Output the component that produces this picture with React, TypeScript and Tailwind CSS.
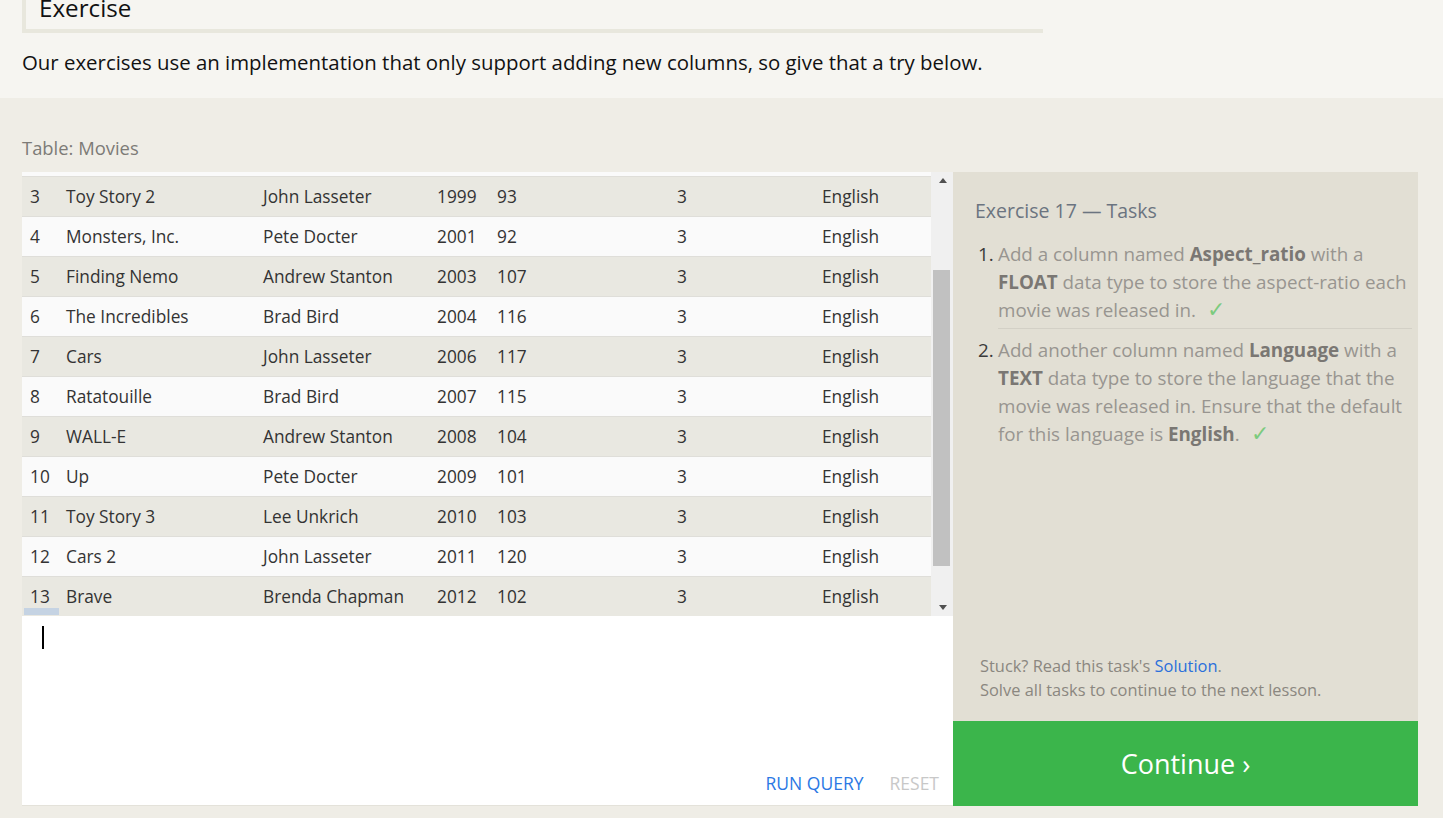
import React from "react";

const rows: [number, string, string, number, number][] = [
  [3, "Toy Story 2", "John Lasseter", 1999, 93],
  [4, "Monsters, Inc.", "Pete Docter", 2001, 92],
  [5, "Finding Nemo", "Andrew Stanton", 2003, 107],
  [6, "The Incredibles", "Brad Bird", 2004, 116],
  [7, "Cars", "John Lasseter", 2006, 117],
  [8, "Ratatouille", "Brad Bird", 2007, 115],
  [9, "WALL-E", "Andrew Stanton", 2008, 104],
  [10, "Up", "Pete Docter", 2009, 101],
  [11, "Toy Story 3", "Lee Unkrich", 2010, 103],
  [12, "Cars 2", "John Lasseter", 2011, 120],
  [13, "Brave", "Brenda Chapman", 2012, 102],
];

function Check() {
  return <span className="ml-[11px] text-[22px] leading-[20px] text-[#7ccb7e] font-['DejaVu_Sans',sans-serif] font-light">✓</span>;
}

export default function App() {
  return (
    <div className="w-[1443px] h-[818px] overflow-hidden bg-[#efede6] font-['Open_Sans',sans-serif]">
      {/* top section */}
      <div className="h-[98px] bg-[#f6f5f1] px-[22px]">
        <div className="w-[1021px] h-[33px] border-l-4 border-b-4 border-[#e8e7dd] pl-[13px] flex items-end overflow-hidden">
          <div className="text-[24.2px] leading-[30px] text-[#111] mb-[6px]">Exercise</div>
        </div>
        <p className="mt-[15px] text-[20.4px] leading-[28px] text-[#111]">
          Our exercises use an implementation that only support adding new columns, so give that a try below.
        </p>
      </div>

      {/* lower section */}
      <div className="px-[22px]">
        <div className="h-[74px] flex items-end pb-[12px]">
          <span className="text-[18.4px] leading-[24px] text-[#7d7b77]">Table: Movies</span>
        </div>
        <div className="flex">
          {/* left column */}
          <div className="w-[931px] flex flex-col">
            <div className="h-[444px] flex bg-[#fafafa] overflow-hidden">
              <div className="w-[909px] flex flex-col">
                <div className="h-[5px] shrink-0 bg-[#fafafa] border-b border-[#dfded9]" />
                {rows.map((r, i) => (
                  <div
                    key={r[0]}
                    className={`relative shrink-0 ${i < rows.length - 1 ? "h-[40px] border-b border-[#dfded9]" : "h-[39px]"} pt-[1px] grid grid-cols-[36px_197px_174px_60px_180px_145px_1fr] items-center pl-[8px] text-[17.3px] text-[#333] ${
                      i % 2 === 0 ? "bg-[#e9e8e1]" : "bg-[#fafafa]"
                    }`}
                  >
                    <span>{r[0]}</span>
                    <span>{r[1]}</span>
                    <span>{r[2]}</span>
                    <span>{r[3]}</span>
                    <span>{r[4]}</span>
                    <span>3</span>
                    <span>English</span>
                    {r[0] === 13 && (
                      <div className="absolute left-[2px] bottom-[1px] w-[35px] h-[7px] bg-[#c5d3e3]" />
                    )}
                  </div>
                ))}
              </div>
              {/* scrollbar */}
              <div className="w-[22px] bg-[#f0f0f0] flex flex-col">
                <div className="h-[17px] flex items-center justify-center pl-[1px]">
                  <div className="w-0 h-0 border-l-[4.5px] border-r-[4.5px] border-b-[5px] border-l-transparent border-r-transparent border-b-[#505050]" />
                </div>
                <div className="h-[81px]" />
                <div className="h-[296px] px-[2px]">
                  <div className="h-full w-[17px] bg-[#c1c1c1]" />
                </div>
                <div className="flex-1" />
                <div className="h-[17px] flex items-center justify-center pl-[1px]">
                  <div className="w-0 h-0 border-l-[4.5px] border-r-[4.5px] border-t-[5px] border-l-transparent border-r-transparent border-t-[#505050]" />
                </div>
              </div>
            </div>
            {/* editor */}
            <div className="h-[190px] bg-white border-b border-[#e4e2da] flex flex-col">
              <div className="pt-[10px] pl-[20px]">
                <div className="w-[2px] h-[23px] bg-black" />
              </div>
              <div className="flex-1" />
              <div className="flex justify-end items-center gap-[26px] pr-[14px] pb-[10px] text-[17.5px] leading-[24px]">
                <span className="text-[#2b78e4]">RUN QUERY</span>
                <span className="text-[#c8c8c8]">RESET</span>
              </div>
            </div>
          </div>

          {/* right panel */}
          <div className="w-[465px] flex flex-col">
            <div className="h-[549px] bg-[#e2dfd4] flex flex-col">
              <div className="pl-[22px] pt-[26px] text-[19.5px] leading-[26px] text-[#6b7480]">
                Exercise 17 — Tasks
              </div>
              <div className="mt-[16px] pl-[25px] pr-[6px] text-[18.8px] leading-[28px] text-[#989590]">
                <div className="flex">
                  <span className="w-[20px] text-[#3a3a3a]">1.</span>
                  <div className="flex-1 whitespace-nowrap pb-[4px] border-b border-[#d3d0c6]">
                    Add a column named <b className="text-[#7a7773]">Aspect_ratio</b> with a
                    <br />
                    <b className="text-[#7a7773]">FLOAT</b> data type to store the aspect-ratio each
                    <br />
                    movie was released in.
                    <Check />
                  </div>
                </div>
                <div className="flex mt-[7px]">
                  <span className="w-[20px] text-[#3a3a3a]">2.</span>
                  <div className="flex-1 whitespace-nowrap">
                    Add another column named <b className="text-[#7a7773]">Language</b> with a
                    <br />
                    <b className="text-[#7a7773]">TEXT</b> data type to store the language that the
                    <br />
                    movie was released in. Ensure that the default
                    <br />
                    for this language is <b className="text-[#7a7773]">English</b>.
                    <Check />
                  </div>
                </div>
              </div>
              <div className="flex-1" />
              <div className="pl-[27px] pb-[19px] text-[16.4px] leading-[24px] text-[#8b8780]">
                <div>
                  Stuck? Read this task's <span className="text-[#2a6fdb]">Solution</span>.
                </div>
                <div>Solve all tasks to continue to the next lesson.</div>
              </div>
            </div>
            <div className="h-[85px] bg-[#3bb54b] flex items-center justify-center text-white text-[27px] leading-none">
              Continue ›
            </div>
          </div>
        </div>
      </div>
    </div>
  );
}
